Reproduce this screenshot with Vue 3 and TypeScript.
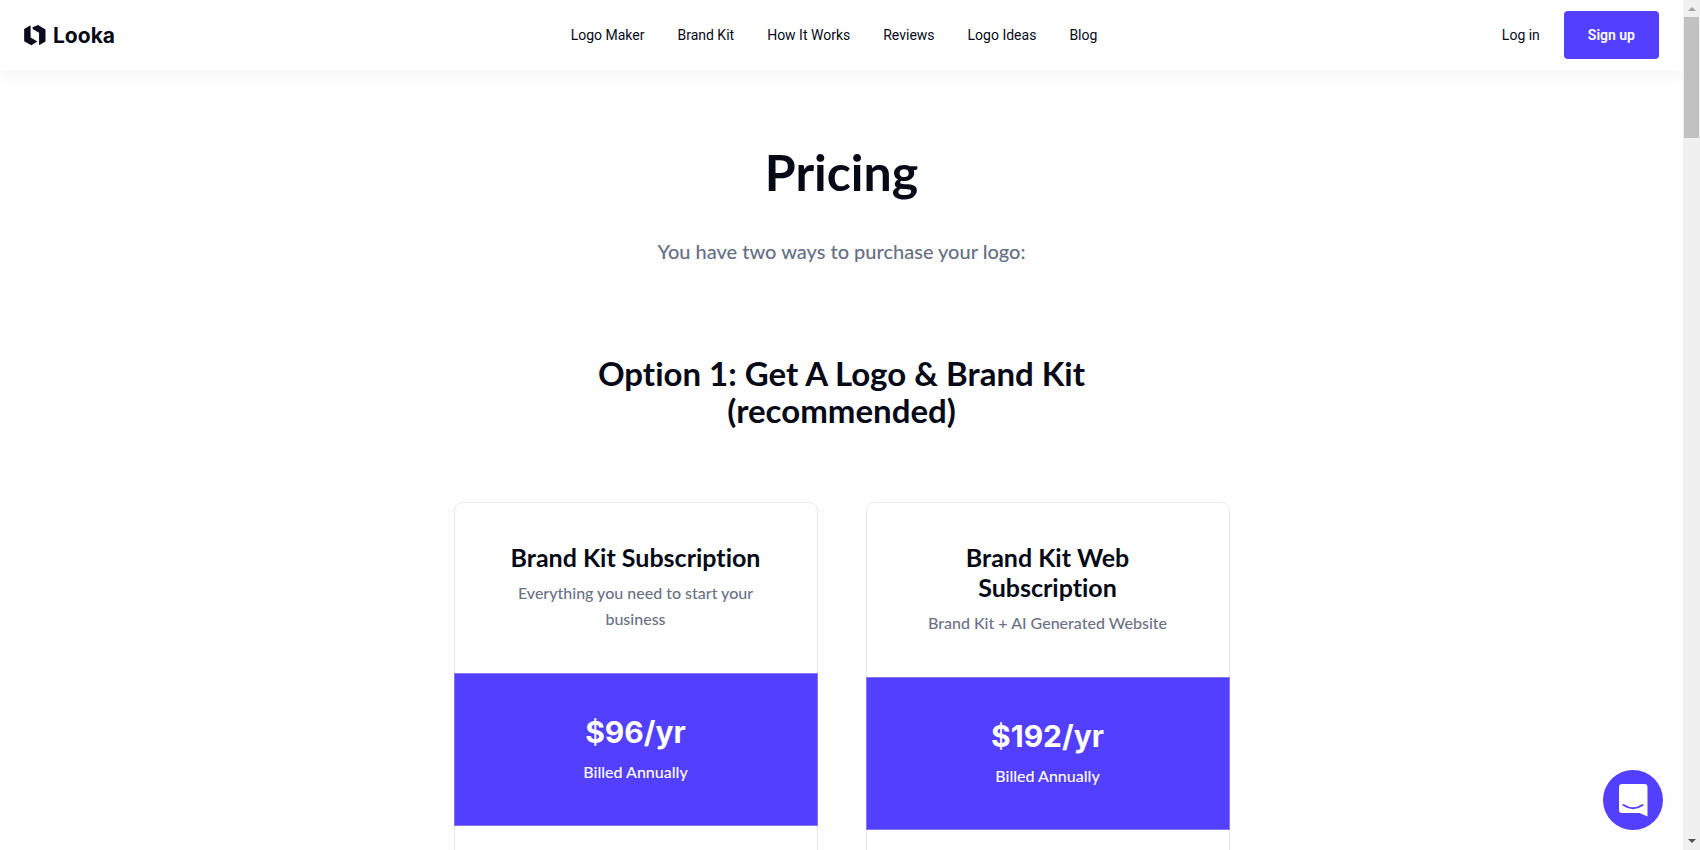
<script setup lang="ts">
interface Plan {
  name: string
  description: string
  price: string
  billing: string
}

const navLinks: string[] = ['Logo Maker', 'Brand Kit', 'How It Works', 'Reviews', 'Logo Ideas', 'Blog']

const plans: Plan[] = [
  {
    name: 'Brand Kit Subscription',
    description: 'Everything you need to start your business',
    price: '$96/yr',
    billing: 'Billed Annually',
  },
  {
    name: 'Brand Kit Web Subscription',
    description: 'Brand Kit + AI Generated Website',
    price: '$192/yr',
    billing: 'Billed Annually',
  },
]
</script>

<template>
  <div class="window">
    <div class="page">
      <header class="header">
        <a class="brand" href="#">
          <svg class="brand-mark" viewBox="0 0 64 62" aria-hidden="true">
            <path d="M0 12 19 1V37L39 49 21 60 0 48Z" />
            <path d="M25 7 41 0 63 13V49L44 60V23L25 12Z" />
          </svg>
          <span>Looka</span>
        </a>
        <nav class="nav">
          <a v-for="link in navLinks" :key="link" href="#">{{ link }}</a>
        </nav>
        <div class="account">
          <a class="login" href="#">Log in</a>
          <button class="signup" type="button">Sign up</button>
        </div>
      </header>

      <main class="content">
        <h1>Pricing</h1>
        <p class="intro">You have two ways to purchase your logo:</p>
        <h2>Option 1: Get A Logo &amp; Brand Kit (recommended)</h2>
        <div class="plans">
          <article v-for="plan in plans" :key="plan.name" class="plan">
            <div class="plan-head">
              <h3>{{ plan.name }}</h3>
              <p>{{ plan.description }}</p>
            </div>
            <div class="plan-price">
              <strong>{{ plan.price }}</strong>
              <span>{{ plan.billing }}</span>
            </div>
          </article>
        </div>
      </main>

      <button class="chat" type="button" aria-label="Open chat">
        <svg viewBox="0 0 60 60" aria-hidden="true">
          <path d="M19 14H41.500Q44.500 14 44.500 17V46.500L36.500 43H19Q16 43 16 40V17Q16 14 19 14Z" fill="#fff" />
          <path d="M20.500 35Q30 41.500 39.500 35" fill="none" stroke="#533fff" stroke-width="2" stroke-linecap="round" />
        </svg>
      </button>
    </div>

    <div class="scrollbar" aria-hidden="true">
      <svg class="arrow up" viewBox="0 0 8 4"><path d="M0 4 4 0 8 4Z" /></svg>
      <div class="thumb"></div>
      <svg class="arrow down" viewBox="0 0 8 4"><path d="M0 0H8L4 4Z" /></svg>
    </div>
  </div>
</template>

<style>
body {
  margin: 0;
  background: #fefefe;
}
</style>

<style scoped>
.window {
  display: flex;
  height: 100vh;
  overflow: hidden;
  color: #060a17;
  font-family: Lato, "Open Sans", sans-serif;
  font-variant-ligatures: none;
}

.page {
  position: relative;
  flex: 1;
  min-width: 0;
  overflow: hidden;
}

.header {
  display: grid;
  grid-template-columns: 1fr auto 1fr;
  align-items: center;
  height: 70px;
  padding: 0 24px;
  background: #fff;
  box-shadow: 0 4px 16px rgba(20, 20, 50, 0.04);
  font-family: Roboto, sans-serif;
  font-size: 14px;
}

a {
  color: inherit;
  text-decoration: none;
}

.brand {
  display: flex;
  align-items: center;
  gap: 7px;
  justify-self: start;
  font-family: Inter, sans-serif;
  font-size: 21px;
  font-weight: 700;
}

.brand-mark {
  width: 22px;
  height: 21px;
  fill: #0c0b1c;
}

.nav {
  display: flex;
  gap: 33px;
  padding-right: 15px;
}

.account {
  display: flex;
  align-items: center;
  gap: 24px;
  justify-self: end;
}

.signup {
  height: 48px;
  padding: 0 24px;
  border: 0;
  border-radius: 4px;
  background: #533fff;
  color: #fff;
  font: 600 14px Roboto, sans-serif;
  cursor: pointer;
}

.content {
  display: flex;
  flex-direction: column;
  align-items: center;
  padding: 72px 24px 0;
  text-align: center;
}

h1,
h2,
h3,
p {
  margin: 0;
}

h1 {
  font-size: 50px;
  line-height: 60px;
}

.intro {
  margin-top: 34px;
  color: #667085;
  font-size: 20px;
  font-weight: 500;
  line-height: 30px;
}

h2 {
  max-width: 560px;
  margin-top: 89px;
  font-size: 33px;
  line-height: 37px;
}

.plans {
  display: grid;
  grid-template-columns: 1fr 1fr;
  gap: 48px;
  width: 100%;
  max-width: 776px;
  margin-top: 73px;
}

.plan {
  min-height: 480px;
  box-sizing: border-box;
  border: 1px solid #e9e9f3;
  border-radius: 8px;
  background: #fff;
}

.plan-head {
  display: flex;
  flex-direction: column;
  gap: 8px;
  padding: 39px 40px 41px;
}

h3 {
  font-size: 25px;
  line-height: 30px;
}

.plan-head p {
  color: #6b7286;
  font-size: 16px;
  font-weight: 500;
  line-height: 26px;
}

.plan-price {
  display: flex;
  flex-direction: column;
  gap: 9px;
  margin: 0 -1px;
  padding: 40px;
  border: 1px solid #8478f2;
  background: #533fff;
  color: #fff;
}

.plan-price strong {
  font-family: Inter, sans-serif;
  font-size: 30px;
  line-height: 36px;
}

.plan-price span {
  font-size: 16px;
  font-weight: 500;
  line-height: 26px;
}

.chat {
  position: absolute;
  right: 20px;
  bottom: 20px;
  width: 60px;
  height: 60px;
  padding: 0;
  border: 0;
  border-radius: 50%;
  background: #533fff;
  cursor: pointer;
}

.chat svg {
  display: block;
}

.scrollbar {
  display: flex;
  flex-direction: column;
  align-items: center;
  flex: 0 0 17px;
  padding: 7px 0;
  box-sizing: border-box;
  background: #f0f0f0;
}

.arrow {
  width: 8px;
  height: 4px;
}

.up {
  fill: #a3a3a3;
}

.down {
  margin-top: auto;
  fill: #505050;
}

.thumb {
  width: 15px;
  height: 121px;
  margin-top: 6px;
  background: #c1c1c1;
}
</style>
